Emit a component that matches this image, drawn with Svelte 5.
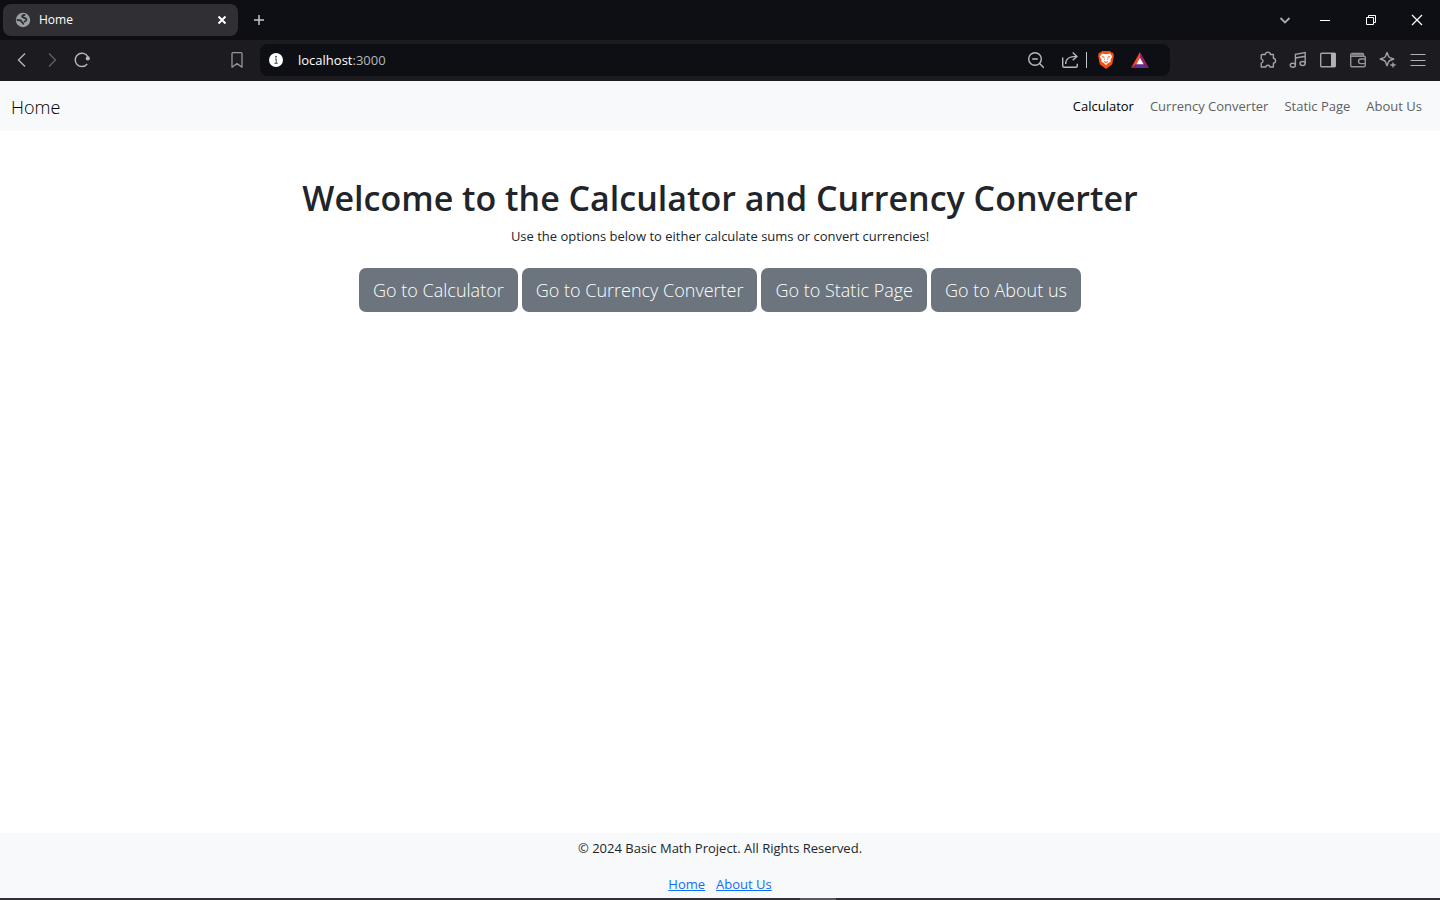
<script>
  const navLinks = ['Calculator', 'Currency Converter', 'Static Page', 'About Us'];
  const actions = ['Go to Calculator', 'Go to Currency Converter', 'Go to Static Page', 'Go to About us'];
</script>

<div class="window">
  <header class="tabs">
    <div class="tab">
      <svg width="16" height="16" viewBox="0 0 16 16" aria-hidden="true">
        <circle cx="8" cy="8" r="7.2" fill="#9aa0a6" />
        <path d="M9.500 3C7.500 3 6.500 4 7.500 5s3.500.8 4 2.300c.3 1.300-1 1.700-1.800 2.200M2.500 8c2 0 3.800.2 4 1.500.2 1.200 1.800.8 1.800 2.300" fill="none" stroke="#303034" stroke-width="1.800" stroke-linecap="round" />
      </svg>
      <span class="tab-title">Home</span>
      <button class="tab-close" aria-label="Close tab">
        <svg width="16" height="16" viewBox="0 0 16 16"><path d="M4.500 4.500l7 7M11.500 4.500l-7 7" stroke="#fff" stroke-width="2" /></svg>
      </button>
    </div>
    <button class="new-tab" aria-label="New tab">
      <svg width="16" height="16" viewBox="0 0 16 16"><path d="M8 3v10M3 8h10" stroke="#c6c6ca" stroke-width="1.500" /></svg>
    </button>
    <div class="window-buttons">
      <button class="search-tabs" aria-label="Search tabs">
        <svg width="16" height="16" viewBox="0 0 16 16"><path d="M3.500 6l4.500 4.500L12.500 6" fill="none" stroke="#a9a9ae" stroke-width="1.800" /></svg>
      </button>
      <button aria-label="Minimize">
        <svg width="16" height="16" viewBox="0 0 16 16"><path d="M3 8.500h10" stroke="#fff" /></svg>
      </button>
      <button aria-label="Restore">
        <svg width="16" height="16" viewBox="0 0 16 16" fill="none" stroke="#fff"><path d="M3.500 5.500h7v7h-7zM5.500 5.500v-2h7v7h-2" /></svg>
      </button>
      <button aria-label="Close window">
        <svg width="16" height="16" viewBox="0 0 16 16"><path d="M3 3l10 10M13 3L3 13" stroke="#fff" stroke-width="1.200" /></svg>
      </button>
    </div>
  </header>

  <div class="toolbar">
    <div class="side">
      <div class="group">
        <button aria-label="Back"><svg width="18" height="18" viewBox="0 0 18 18"><path d="M12 2.500L5.500 9l6.500 6.500" fill="none" stroke="#b4b4b9" stroke-width="1.400" /></svg></button>
        <button aria-label="Forward"><svg width="18" height="18" viewBox="0 0 18 18"><path d="M6 2.500L12.500 9 6 15.500" fill="none" stroke="#5e5e64" stroke-width="1.400" /></svg></button>
        <button aria-label="Reload"><svg width="18" height="18" viewBox="0 0 18 18"><path d="M14.200 13A6.700 6.700 0 1 1 15 6" fill="none" stroke="#b4b4b9" stroke-width="1.500" /><circle cx="14.800" cy="7.400" r="2.100" fill="#b4b4b9" /></svg></button>
      </div>
      <button aria-label="Bookmark"><svg width="18" height="18" viewBox="0 0 18 18"><path d="M5 1.600h8a1 1 0 0 1 1 1v13.600l-5-3.600-5 3.600V2.600a1 1 0 0 1 1-1z" fill="none" stroke="#96969c" stroke-width="1.300" stroke-linejoin="round" /></svg></button>
    </div>

    <div class="address">
      <button aria-label="Site information"><svg width="16" height="16" viewBox="0 0 16 16"><circle cx="8" cy="8" r="7" fill="#fff" /><path d="M7 7.200h1.200v4M6.500 11.300h3.200" fill="none" stroke="#66676c" stroke-width="1.200" /><circle cx="8" cy="4.800" r="1" fill="#55565c" /></svg></button>
      <a class="url" href="#home">localhost<span>:3000</span></a>
      <button class="zoom" aria-label="Zoom out"><svg width="18" height="18" viewBox="0 0 18 18" fill="none" stroke="#b9b9be" stroke-width="1.400"><circle cx="8" cy="8" r="6.300" /><path d="M5.200 8h5.600M12.600 12.600l4.200 4.200" /></svg></button>
      <button class="share" aria-label="Share"><svg width="18" height="18" viewBox="0 0 18 18" fill="none" stroke="#b9b9be" stroke-width="1.400"><path d="M1.700 6.500v8.300a1.500 1.500 0 0 0 1.500 1.500h11.600a1.500 1.500 0 0 0 1.500-1.500v-2M4.700 13c0-5.200 2.800-7.600 11-7.600M11.700 1.500l4.200 3.900-4.200 3.900" /></svg></button>
      <span class="divider"></span>
      <button class="shield" aria-label="Shields"><svg width="18" height="20" viewBox="0 0 18 20"><path d="M5 1h8l1.500 1.600 1.700.2.700 3-1.700 8.400L9 19l-6.200-4.800L1.100 5.800l.7-3 1.700-.2z" fill="#fb4d0b" /><path d="M5 3.500l4 .8 4-.8 2.200 3-1.700 3.300.1 1.900-2.400 1.400L9 15.200l-2.200-2.100-2.400-1.400.1-1.900-1.700-3.300z" fill="#fff" /><path d="M4.800 6.700l2.600.5M13.200 6.700l-2.600.5M7.300 8.500v1.200M10.700 8.500v1.200M7 11.500l2 1 2-1" fill="none" stroke="#fb4d0b" stroke-width="1" /></svg></button>
      <button class="rewards" aria-label="Rewards"><svg width="18" height="18" viewBox="0 0 18 18"><path d="M9 1v6L5.500 13 0 17z" fill="#ff4724" /><path d="M9 1l9 16-5.500-4L9 7z" fill="#9e1f63" /><path d="M0 17l5.500-4h7l5.500 4z" fill="#662d91" /><path d="M9 6.800l3.700 6.400H5.300z" fill="#fff" /></svg></button>
    </div>

    <div class="side right">
      <button aria-label="Extensions"><svg width="18" height="18" viewBox="0 0 18 18" fill="none" stroke="#a2a2a8" stroke-width="1.400" stroke-linejoin="round"><path d="M3.200 3.500h3.100c0-3.200 5-3.200 5 0h3.100v3.700c2.900.4 2.900 4.600 0 5V16h-3.500c-.3-2.300-3.700-2.300-4.200 0H2.200v-3.900c2.400-.5 2.400-3.700 0-4.200V4.500a1 1 0 0 1 1-1z" /></svg></button>
      <button aria-label="Media controls"><svg width="18" height="18" viewBox="0 0 18 18" fill="none" stroke="#a2a2a8" stroke-width="1.400"><ellipse cx="3.800" cy="14.200" rx="2.600" ry="2" /><ellipse cx="13.600" cy="12.500" rx="2.600" ry="2" /><path d="M6.400 14.200V3.300l9.800-1.800v11M6.400 7l9.800-1.800" /></svg></button>
      <button aria-label="Sidebar"><svg width="18" height="18" viewBox="0 0 18 18"><rect x="1.700" y="2.200" width="14.600" height="13.600" rx="1" fill="none" stroke="#a2a2a8" stroke-width="1.400" /><path d="M12 2h4.500v14H12z" fill="#b0b0b5" /></svg></button>
      <button aria-label="Wallet"><svg width="18" height="18" viewBox="0 0 18 18" fill="none" stroke="#929298" stroke-width="1.400"><path d="M14.500 5V3.500a1 1 0 0 0-1-1H3a1.300 1.300 0 0 0 0 2.700h12a1.300 1.300 0 0 1 1.300 1.300v8a1.300 1.300 0 0 1-1.300 1.300H3a1.300 1.300 0 0 1-1.300-1.300V3.800" /><path d="M16.300 8h-4.500a2.200 2.200 0 0 0 0 4.600h4.500M3 3.900h11" /></svg></button>
      <button aria-label="Assistant"><svg width="18" height="18" viewBox="0 0 18 18" fill="none" stroke="#a2a2a8" stroke-width="1.400" stroke-linejoin="round"><path d="M8 1.500l1.500 3.800c.3.700.7 1.100 1.400 1.400L14.700 8l-3.800 1.500c-.7.300-1.100.7-1.400 1.400L8 14.700l-1.500-3.800c-.3-.7-.7-1.100-1.400-1.400L1.300 8l3.800-1.300c.7-.3 1.100-.7 1.400-1.400z" /><path d="M14 11.400v5.200M11.400 14h5.200" /></svg></button>
      <button aria-label="Menu"><svg width="18" height="18" viewBox="0 0 18 18"><path d="M1.500 3.500h15M1.500 9.500h15M1.500 14.500h15" stroke="#b0b0b5" stroke-width="1.100" /></svg></button>
    </div>
  </div>

  <nav class="navbar">
    <a class="brand" href="#home">Home</a>
    <ul>
      {#each navLinks as link, i}
        <li><a class:active={i === 0} href="#page">{link}</a></li>
      {/each}
    </ul>
  </nav>

  <main>
    <h1>Welcome to the Calculator and Currency Converter</h1>
    <p>Use the options below to either calculate sums or convert currencies!</p>
    <div class="actions">
      {#each actions as action}
        <a href="#page">{action}</a>
      {/each}
    </div>
  </main>

  <footer>
    <p>© 2024 Basic Math Project. All Rights Reserved.</p>
    <div class="footer-links">
      <a href="#home">Home</a>
      <a href="#about">About Us</a>
    </div>
  </footer>
  <div class="taskbar"><span></span></div>
</div>

<style>
  :global(body) {
    margin: 0;
  }
  .window {
    min-height: 100vh;
    display: flex;
    flex-direction: column;
    background: #fff;
    color: #212529;
    font-family: "Open Sans", "Noto Sans", sans-serif;
    font-size: 13px;
    line-height: 22px;
  }
  svg {
    display: block;
  }
  button {
    display: flex;
    align-items: center;
    justify-content: center;
    padding: 0;
    border: 0;
    background: none;
  }
  .tabs {
    display: flex;
    align-items: center;
    height: 40px;
    padding-left: 3px;
    background: #0e0f14;
  }
  .tab {
    box-sizing: border-box;
    display: flex;
    align-items: center;
    width: 235px;
    height: 32px;
    padding: 0 8px 0 12px;
    border-radius: 8px;
    background: #303034;
    color: #fff;
    font-size: 12px;
  }
  .tab-title {
    flex: 1;
    padding-left: 8px;
  }
  .new-tab {
    margin-left: 13px;
  }
  .window-buttons {
    display: flex;
    margin-left: auto;
  }
  .window-buttons button {
    width: 46px;
    height: 40px;
  }
  .window-buttons .search-tabs {
    width: 34px;
  }
  .toolbar {
    display: flex;
    align-items: center;
    height: 40px;
    border-bottom: 1px solid #1c1b20;
    background: #1c1b20;
  }
  .side {
    box-sizing: border-box;
    display: flex;
    justify-content: space-between;
    width: 260px;
    padding: 0 14px 0 13px;
  }
  .group {
    display: flex;
    gap: 12px;
  }
  .right {
    width: 270px;
    justify-content: flex-end;
    gap: 12px;
    padding: 0 13px 0 0;
  }
  .address {
    flex: 1;
    display: flex;
    align-items: center;
    height: 32px;
    padding: 0 21px 0 8px;
    border-radius: 8px;
    background: #0e0f14;
  }
  .url {
    flex: 1;
    padding-left: 14px;
    color: #fff;
    text-decoration: none;
  }
  .url span {
    color: #b6b6ba;
  }
  .share {
    margin: 0 7px 0 16px;
  }
  .divider {
    width: 1px;
    height: 16px;
    background: #c6c6ca;
  }
  .shield {
    margin: 0 16px 0 10px;
  }
  .navbar {
    display: flex;
    align-items: center;
    justify-content: space-between;
    height: 50px;
    padding: 0 18px 0 11px;
    background: #f8f9fa;
  }
  .navbar a {
    color: #5e6061;
    text-decoration: none;
  }
  .navbar .brand {
    padding-top: 2px;
    color: #000;
    font-size: 18px;
    font-weight: 300;
  }
  .navbar .active {
    color: #000;
  }
  ul {
    display: flex;
    gap: 16px;
    margin: 0;
    padding: 0;
    list-style: none;
  }
  main {
    flex: 1;
    padding-top: 46px;
    text-align: center;
  }
  h1 {
    margin: 0 0 5px;
    font-size: 34px;
    line-height: 43px;
    font-weight: 600;
  }
  p {
    margin: 0;
  }
  .actions {
    display: flex;
    justify-content: center;
    gap: 4px;
    margin-top: 21px;
  }
  .actions a {
    padding: 9px 14px;
    border-radius: 7px;
    background: #6c757d;
    color: #fff;
    font-size: 18px;
    font-weight: 300;
    line-height: 26px;
    text-decoration: none;
  }
  footer {
    padding: 4px 0 3px;
    background: #f8f9fa;
    text-align: center;
  }
  .footer-links {
    display: flex;
    justify-content: center;
    gap: 11px;
    margin-top: 14px;
  }
  .footer-links a {
    color: #0d6efd;
  }
  .taskbar {
    display: flex;
    justify-content: center;
    height: 2px;
    padding-left: 196px;
    background: #303034;
  }
  .taskbar span {
    width: 36px;
    background: #5a5a5e;
  }
</style>
